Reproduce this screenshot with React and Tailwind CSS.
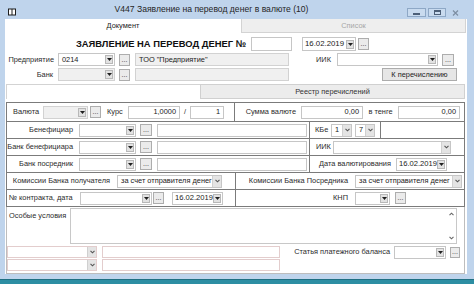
import React from "react";

const Drop = () => (
  <div className="w-[8px] h-[9px] mr-[1px] shrink-0 bg-[#e2e2e2] border border-[#b8b8b8] flex items-center justify-center">
    <svg width="5" height="3" viewBox="0 0 5 3">
      <path d="M0 0h5L2.5 3z" fill="#1e1e1e" />
    </svg>
  </div>
);

const Chev = () => (
  <div className="w-[9px] h-full shrink-0 bg-[#e4e4e4] border-l border-[#d0d0d0] flex items-center justify-center">
    <svg width="5" height="4" viewBox="0 0 5 4">
      <path d="M0.5 0.8L2.5 2.8L4.5 0.8" stroke="#555" strokeWidth="1.1" fill="none" />
    </svg>
  </div>
);

const Input = ({ className = "", gray = false, pink = false, right = false, tight = false, arrow, children }) => {
  let skin = "bg-white border-[#c6c6c6]";
  if (gray) skin = "bg-[#f0f0f0] border-[#d2d2d2]";
  if (pink) skin = "bg-white border-[#e3cdcd]";
  return (
    <div className={`${className} ${skin} shrink-0 border flex items-center overflow-hidden`}>
      <span
        className={`flex-1 whitespace-nowrap overflow-hidden text-[#222] ${tight ? "px-[2px]" : "px-[3px]"} ${right ? "text-right" : ""}`}
      >
        {children}
      </span>
      {arrow === "drop" && <Drop />}
      {arrow === "chev" && <Chev />}
    </div>
  );
};

const Dots = ({ className = "w-[11px] h-[12px]" }) => (
  <div className={`${className} shrink-0 border border-[#adadad] bg-[#ebebeb] flex items-end justify-center pb-[2px] text-[7px] text-[#333]`}>
    ...
  </div>
);

const WinBtn = ({ className, children }) => (
  <div className={`${className} h-[9px] flex items-center justify-center`}>{children}</div>
);

export default function App() {
  return (
    <div className="w-[474px] h-[284px] overflow-hidden bg-[#bfd4ec] flex flex-col font-['Liberation_Sans',Arial,sans-serif] text-[7.4px] leading-none text-[#2b2b2b]">
      {/* title bar */}
      <div className="h-[19px] shrink-0 flex items-start">
        <div className="ml-[8px] mt-[8px] w-[8px] h-[8px]">
          <svg width="8" height="8" viewBox="0 0 8 8">
            <rect x="0" y="0.5" width="8" height="7" fill="#1c1c1c" />
            <rect x="1" y="1.5" width="2.5" height="5" fill="#fff" />
            <rect x="4.5" y="1.5" width="2.5" height="5" fill="#fff" />
          </svg>
        </div>
        <div className="flex-1 text-center mt-[5px] text-[8.6px] text-[#262626]">
          V447 Заявление на перевод денег в валюте (10)
        </div>
        <div className="mt-[8px] mr-[11px] flex gap-[2px]">
          <WinBtn className="w-[19px] border border-[#8ea8c6] bg-[#c9dbef]">
            <div className="w-[7px] h-[2px] bg-[#4c5f78] mt-[2px]" />
          </WinBtn>
          <WinBtn className="w-[18px] border border-[#8ea8c6] bg-[#c9dbef]">
            <div className="w-[7px] h-[5px] border border-[#4c5f78] border-t-2" />
          </WinBtn>
          <WinBtn className="w-[15px]">
            <svg width="7" height="6" viewBox="0 0 7 6">
              <path d="M1 0.5L6 5.5M6 0.5L1 5.5" stroke="#7d8ea3" strokeWidth="1.2" />
            </svg>
          </WinBtn>
        </div>
      </div>

      {/* client */}
      <div className="ml-[5px] w-[462px] h-[255px] shrink-0 bg-white flex flex-col">
        <div className="h-[14px] flex shrink-0">
          <div className="w-[236px] flex items-center justify-center text-[#222]">Документ</div>
          <div className="w-[225px] bg-[#eeeeee] border border-t-0 border-[#d3d3d3] flex items-center justify-center text-[#a6a6a6]">
            Список
          </div>
        </div>

        <div className="mt-[4px] h-[14px] flex items-center shrink-0">
          <div className="ml-[70px] w-[172px] text-center font-bold text-[9.4px] text-[#111]">
            ЗАЯВЛЕНИЕ НА ПЕРЕВОД ДЕНЕГ №
          </div>
          <Input className="ml-[4px] w-[41px] h-[14px]" />
          <Input tight className="ml-[10px] w-[54px] h-[14px] text-[7.8px]" arrow="drop">16.02.2019</Input>
          <Dots className="ml-[2px] w-[11px] h-[12px]" />
        </div>

        <div className="mt-[2px] h-[13px] flex items-center shrink-0">
          <div className="w-[50px] text-right pr-[1px]">Предприятие</div>
          <Input className="ml-[3px] w-[57px] h-[13px]" arrow="drop">0214</Input>
          <Dots className="ml-[4px] w-[11px] h-[12px]" />
          <Input gray className="ml-[5px] w-[154px] h-[13px]">ТОО "Предприятие"</Input>
          <div className="w-[43px] text-right pr-[1px]">ИИК</div>
          <Input className="ml-[5px] w-[101px] h-[13px]" arrow="drop" />
          <Dots className="ml-[4px] w-[12px] h-[12px]" />
        </div>

        <div className="mt-[2px] h-[13px] flex items-center shrink-0">
          <div className="w-[50px] text-right pr-[2px]">Банк</div>
          <Input gray className="ml-[3px] w-[57px] h-[13px]" arrow="drop" />
          <Dots className="ml-[4px] w-[11px] h-[12px]" />
          <Input gray className="ml-[5px] w-[154px] h-[13px]" />
          <div className="ml-[93px] w-[75px] h-[13px] border border-[#acacac] bg-[#e6e6e6] flex items-center justify-center text-[#222]">
            К перечислению
          </div>
        </div>

        <div className="mt-[3px] ml-[1px] h-[15px] flex shrink-0">
          <div className="w-[194px] border-t border-l border-[#d3d3d3]" />
          <div className="w-[265px] bg-[#ececec] border border-[#d0d0d0] flex items-center justify-center text-[#333]">
            Реестр перечислений
          </div>
        </div>

        <div className="ml-[1px] w-[459px] flex-1 flex flex-col">
          {/* row A */}
          <div className="mt-[3px] h-[19px] shrink-0 flex border-t border-x border-[#7b7b7b]">
            <div className="w-[228px] border-r border-[#7b7b7b] flex items-center">
              <div className="w-[36px] pl-[6px]">Валюта</div>
              <Input gray className="w-[45px] h-[13px]" arrow="drop" />
              <Dots className="ml-[2px] w-[11px] h-[12px]" />
              <div className="ml-[6px] w-[21px]">Курс</div>
              <Input right className="w-[52px] h-[13px]">1,0000</Input>
              <div className="w-[10px] text-center">/</div>
              <Input right className="w-[34px] h-[13px]">1</Input>
            </div>
            <div className="flex-1 flex items-center">
              <div className="w-[66px] text-right pr-[5px]">Сумма валюте</div>
              <Input right className="w-[62px] h-[13px]">0,00</Input>
              <div className="w-[35px] text-center">в тенге</div>
              <Input right className="w-[62px] h-[13px]">0,00</Input>
            </div>
          </div>

          {/* row B */}
          <div className="h-[17px] shrink-0 flex border-t border-x border-[#7b7b7b]">
            <div className="w-[303px] border-r border-[#7b7b7b] flex items-center">
              <div className="w-[67px] text-right pr-[1px]">Бенефициар</div>
              <Input className="ml-[5px] w-[57px] h-[13px]" arrow="drop" />
              <Dots className="ml-[4px] w-[12px] h-[12px]" />
              <Input className="ml-[5px] w-[150px] h-[13px]" />
            </div>
            <div className="w-[71px] border-r border-[#7b7b7b] flex items-center">
              <div className="w-[21px] pl-[5px]">КБе</div>
              <Input className="w-[21px] h-[13px]" arrow="chev">1</Input>
              <Input className="ml-[3px] w-[20px] h-[13px]" arrow="chev">7</Input>
            </div>
          </div>

          {/* row C */}
          <div className="h-[17px] shrink-0 flex border-t border-x border-[#7b7b7b]">
            <div className="w-[303px] border-r border-[#7b7b7b] flex items-center">
              <div className="w-[67px] text-right pr-[1px]">Банк бенефициара</div>
              <Input className="ml-[5px] w-[57px] h-[13px]" arrow="drop" />
              <Dots className="ml-[4px] w-[12px] h-[12px]" />
              <Input className="ml-[5px] w-[150px] h-[13px]" />
            </div>
            <div className="flex-1 flex items-center">
              <div className="w-[23px] pl-[6px]">ИИК</div>
              <Input className="w-[118px] h-[13px]" arrow="chev" />
            </div>
          </div>

          {/* row D */}
          <div className="h-[17px] shrink-0 flex border-t border-x border-[#7b7b7b]">
            <div className="w-[303px] border-r border-[#7b7b7b] flex items-center">
              <div className="w-[67px] text-right pr-[1px]">Банк посредник</div>
              <Input className="ml-[5px] w-[57px] h-[13px]" arrow="drop" />
              <Dots className="ml-[4px] w-[12px] h-[12px]" />
              <Input className="ml-[5px] w-[150px] h-[13px]" />
            </div>
            <div className="flex-1 flex items-center">
              <div className="w-[86px] text-right pr-[5px]">Дата валютирования</div>
              <Input tight className="w-[51px] h-[13px] text-[7.6px]" arrow="drop">16.02.2019</Input>
            </div>
          </div>

          {/* row E */}
          <div className="h-[17px] shrink-0 flex border-t border-x border-[#7b7b7b]">
            <div className="w-[229px] border-r border-[#7b7b7b] flex items-center">
              <div className="w-[104px] text-right pr-[1px]">Комиссии Банка получателя</div>
              <Input className="ml-[6px] w-[105px] h-[13px]" arrow="chev">за счет отправителя денег</Input>
            </div>
            <div className="flex-1 flex items-center">
              <div className="w-[116px] text-right pr-[4px]">Комиссии Банка Посредника</div>
              <Input className="ml-[3px] w-[107px] h-[13px]" arrow="chev">за счет отправителя денег</Input>
            </div>
          </div>

          {/* row F */}
          <div className="h-[18px] shrink-0 flex border-y border-x border-[#7b7b7b]">
            <div className="w-[229px] border-r border-[#7b7b7b] flex items-center">
              <div className="w-[68px] pl-[2px]">№ контракта, дата</div>
              <Input className="ml-[5px] w-[72px] h-[13px]" arrow="drop" />
              <Dots className="ml-[1px] w-[11px] h-[12px]" />
              <Input tight className="ml-[8px] w-[51px] h-[13px] text-[7.6px]" arrow="drop">16.02.2019</Input>
            </div>
            <div className="flex-1 flex items-center">
              <div className="w-[116px] text-right pr-[4px]">КНП</div>
              <Input className="ml-[3px] w-[35px] h-[13px]" arrow="drop" />
              <Dots className="ml-[5px] w-[11px] h-[12px]" />
            </div>
          </div>

          {/* lower section */}
          <div className="flex-1 flex flex-col border-x border-b border-[#bdbdbd]">
            <div className="mt-[1px] flex">
              <div className="w-[63px] pl-[2px] pt-[4px]">Особые условия</div>
              <div className="w-[387px] h-[36px] border border-[#c8c8c8] flex justify-end">
                <div className="w-[10px] flex flex-col items-center justify-between py-[3px]">
                  <svg width="5" height="4" viewBox="0 0 5 4">
                    <path d="M0.5 3.2L2.5 1.2L4.5 3.2" stroke="#666" strokeWidth="1.1" fill="none" />
                  </svg>
                  <svg width="5" height="4" viewBox="0 0 5 4">
                    <path d="M0.5 0.8L2.5 2.8L4.5 0.8" stroke="#666" strokeWidth="1.1" fill="none" />
                  </svg>
                </div>
              </div>
            </div>
            <div className="mt-[2px] h-[12px] flex items-center">
              <Input pink className="w-[90px] h-[12px]" arrow="chev" />
              <Input pink className="ml-[5px] w-[178px] h-[12px]" />
              <div className="w-[114px] text-right pr-[4px]">Статья платежного баланса</div>
              <Input className="w-[52px] h-[13px]" arrow="drop" />
              <Dots className="ml-[4px] w-[10px] h-[11px]" />
            </div>
            <div className="mt-[1px] h-[12px] flex items-center">
              <Input pink className="w-[90px] h-[12px]" arrow="chev" />
              <Input pink className="ml-[5px] w-[178px] h-[12px]" />
            </div>
          </div>
        </div>
      </div>

      <div className="h-[5px] shrink-0" />
      <div className="flex-1 bg-[#2d8ea3] border-t border-[#1f6f82]" />
    </div>
  );
}
